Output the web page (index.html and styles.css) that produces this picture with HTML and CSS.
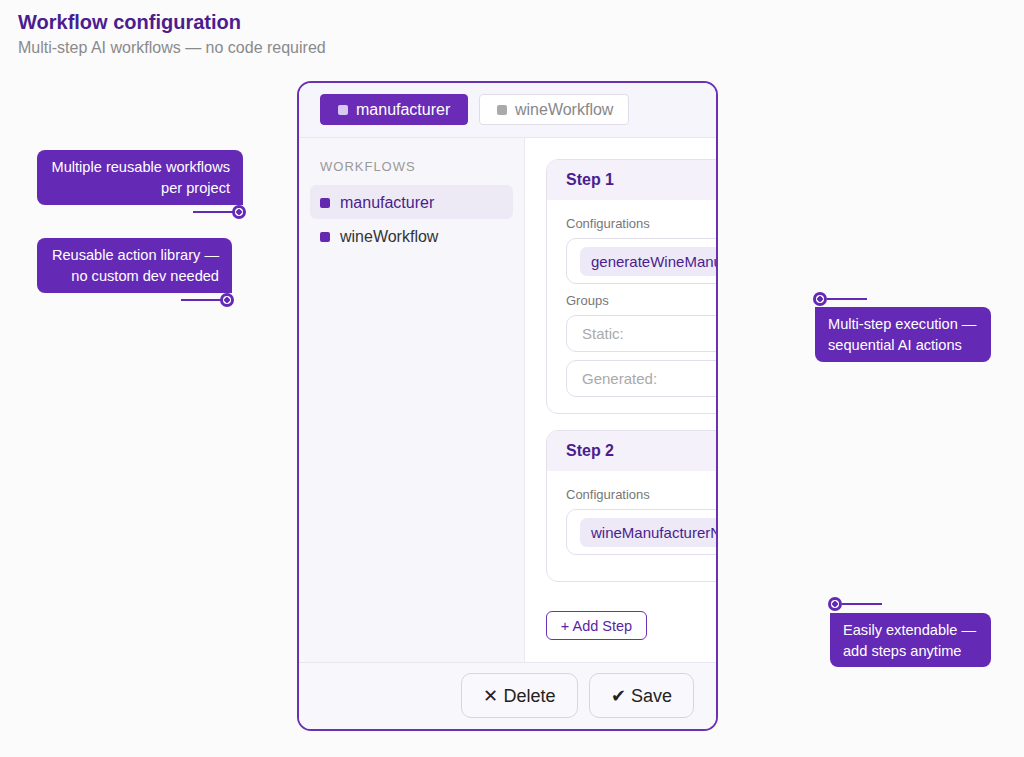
FILE: index.html
```html
<!DOCTYPE html>
<html lang="en">
<head>
  <meta charset="UTF-8" />
  <title>Workflow configuration</title>
  <link rel="stylesheet" href="styles.css">
</head>
<body>
  <header class="page-head">
    <h1>Workflow configuration</h1>
    <p>Multi-step AI workflows — no code required</p>
  </header>

  <div class="panel">
    <!-- workflow tabs -->
    <div class="tabs">
      <div class="tab active"><span class="sq"></span>manufacturer</div>
      <div class="tab"><span class="sq"></span>wineWorkflow</div>
    </div>

    <div class="panel-body">
      <aside class="sidebar">
        <div class="side-label">WORKFLOWS</div>
        <div class="side-item selected"><span class="dot"></span>manufacturer</div>
        <div class="side-item"><span class="dot"></span>wineWorkflow</div>
      </aside>

      <main class="steps">
        <div class="step">
          <div class="step-head">Step 1</div>
          <div class="step-body">
            <div class="field-label">Configurations</div>
            <div class="field"><span class="chip">generateWineManufacturer</span></div>
            <div class="field-label">Groups</div>
            <div class="field input">Static:</div>
            <div class="field input">Generated:</div>
          </div>
        </div>

        <div class="step">
          <div class="step-head">Step 2</div>
          <div class="step-body tall">
            <div class="field-label">Configurations</div>
            <div class="field"><span class="chip">wineManufacturerNotes</span></div>
          </div>
        </div>

        <button class="add-step">+ Add Step</button>
      </main>
    </div>

    <div class="panel-foot">
      <button class="foot-btn">✕ Delete</button>
      <button class="foot-btn">✔ Save</button>
    </div>
  </div>

  <!-- callouts around the panel -->
  <div class="callout left c1">Multiple reusable workflows<br>per project</div>
  <div class="pin pin-l p1"><span class="line"></span><span class="ring"></span></div>

  <div class="callout left c2">Reusable action library —<br>no custom dev needed</div>
  <div class="pin pin-l p2"><span class="line"></span><span class="ring"></span></div>

  <div class="callout right c3">Multi-step execution —<br>sequential AI actions</div>
  <div class="pin p3"><span class="ring"></span><span class="line"></span></div>

  <div class="callout right c4">Easily extendable —<br>add steps anytime</div>
  <div class="pin p4"><span class="ring"></span><span class="line"></span></div>
</body>
</html>
```

FILE: styles.css
```css
body {
  margin: 0;
  padding: 10px 18px 0;
  position: relative;
  font-family: 'Liberation Sans', Arial, sans-serif;
  background: #fbfbfc;
  color: #222;
}

.page-head h1 {
  margin: 0;
  font-size: 20px;
  line-height: 24px;
  color: #4b1d8f;
}

.page-head p {
  margin: 4px 0 0;
  font-size: 16px;
  line-height: 19px;
  color: #8a8a8a;
}

.panel {
  margin: 24px 0 0 279px;
  width: 417px;
  height: 646px;
  border: 2px solid #6a32b2;
  border-radius: 14px;
  background: #f8f7fc;
  overflow: hidden;
  display: flex;
  flex-direction: column;
}

.tabs {
  height: 55px;
  box-sizing: border-box;
  padding: 11px 21px 0;
  display: flex;
  gap: 11px;
  border-bottom: 1px solid #e9e6f1;
  background: #f7f5fc;
}

.tab {
  height: 31px;
  box-sizing: border-box;
  padding: 0 17px;
  display: flex;
  align-items: center;
  gap: 8px;
  font-size: 16px;
  border-radius: 4px;
  background: #fff;
  border: 1px solid #e1dde8;
  color: #888;
  white-space: nowrap;
}

.tab .sq {
  width: 10px;
  height: 10px;
  flex-shrink: 0;
  border-radius: 2px;
  background: #aaa;
}

.tab.active {
  width: 148px;
  background: #6a2bb6;
  border-color: #6a2bb6;
  color: #fff;
}

.tab.active .sq {
  background: #d8c8f2;
}

.tab:not(.active) {
  width: 150px;
}

.panel-body {
  flex: 1;
  display: flex;
  min-height: 0;
}

.sidebar {
  width: 226px;
  flex-shrink: 0;
  box-sizing: border-box;
  padding: 21px 11px 0;
  border-right: 1px solid #ebe8f1;
  background: #f7f6fb;
}

.side-label {
  font-size: 13px;
  letter-spacing: 1px;
  color: #999;
  padding-left: 10px;
  margin-bottom: 11px;
}

.side-item {
  height: 34px;
  display: flex;
  align-items: center;
  gap: 10px;
  padding-left: 10px;
  padding-top: 2px;
  box-sizing: border-box;
  border-radius: 6px;
  font-size: 16px;
  color: #333;
}

.side-item .dot {
  width: 10px;
  height: 10px;
  flex-shrink: 0;
  border-radius: 2px;
  background: #6429b0;
}

.side-item.selected {
  background: #edeaf5;
  color: #4b1d8f;
}

.steps {
  flex: 1;
  padding: 21px 0 0 21px;
  background: #fff;
  min-width: 0;
}

.step {
  width: 300px;
  border: 1px solid #e4e0ee;
  border-radius: 12px;
  overflow: hidden;
  margin-bottom: 16px;
}

.step-head {
  height: 40px;
  box-sizing: border-box;
  padding: 11px 19px 0;
  background: #f4f1fa;
  font-size: 16px;
  font-weight: bold;
  color: #4b1d8f;
}

.step-body {
  padding: 16px 19px 16px;
}

.step-body.tall {
  padding-bottom: 26px;
}

.field-label {
  font-size: 13px;
  line-height: 16px;
  color: #777;
  margin-bottom: 6px;
}

.field {
  box-sizing: border-box;
  height: 46px;
  padding: 8px 13px;
  border: 1px solid #e2deea;
  border-radius: 10px;
  margin-bottom: 9px;
}

.field.input {
  height: 37px;
  padding: 0 15px;
  display: flex;
  align-items: center;
  font-size: 15px;
  color: #aaa;
  margin-bottom: 8px;
}

.step-body .field:last-child {
  margin-bottom: 0;
}

.chip {
  display: inline-block;
  height: 29px;
  line-height: 29px;
  padding: 0 11px;
  border-radius: 7px;
  background: #ede9f7;
  font-size: 15px;
  color: #4b1d8f;
  white-space: nowrap;
}

.add-step {
  margin-top: 13px;
  width: 101px;
  height: 29px;
  padding: 0;
  background: #fff;
  border: 1.5px solid #6a32b2;
  border-radius: 6px;
  font-family: inherit;
  font-size: 14.5px;
  color: #5a259f;
}

.panel-foot {
  height: 67px;
  box-sizing: border-box;
  padding: 10px 22px 0;
  display: flex;
  justify-content: flex-end;
  gap: 11px;
  border-top: 1px solid #e9e6f1;
  background: #f8f7fc;
}

.foot-btn {
  height: 45px;
  padding: 0 18px;
  border: 1px solid #d8d4e0;
  border-radius: 10px;
  background: #f9f8fc;
  font-family: inherit;
  font-size: 18px;
  color: #222;
}

.foot-btn:first-child {
  width: 117px;
}

.foot-btn:last-child {
  width: 105px;
}

/* callouts */
.callout {
  position: absolute;
  box-sizing: border-box;
  height: 55px;
  padding: 7px 13px;
  background: #6429b5;
  color: #fff;
  font-size: 14.6px;
  line-height: 21px;
  white-space: nowrap;
}

.callout.left {
  text-align: right;
  border-radius: 8px 8px 0 8px;
}

.callout.right {
  text-align: left;
  border-radius: 0 8px 8px 8px;
}

.c1 { left: 37px; top: 150px; width: 206px; }
.c2 { left: 37px; top: 238px; width: 195px; }
.c3 { left: 815px; top: 307px; width: 176px; }
.c4 { left: 830px; top: 613px; width: 161px; height: 54px; }

.pin {
  position: absolute;
  display: flex;
  align-items: center;
  height: 14px;
}

.pin .ring {
  width: 14px;
  height: 14px;
  box-sizing: border-box;
  border-radius: 50%;
  border: 3px solid #6429b5;
  background: radial-gradient(circle, #6429b5 0 2.5px, #fff 3px);
}

.pin .line {
  width: 40px;
  height: 2px;
  background: #6429b5;
}

.pin-l .line { margin-right: -1px; }

.p1 { left: 193px; top: 205px; }
.p2 { left: 181px; top: 293px; }
.p3 { left: 813px; top: 292px; }
.p4 { left: 828px; top: 597px; }
```
